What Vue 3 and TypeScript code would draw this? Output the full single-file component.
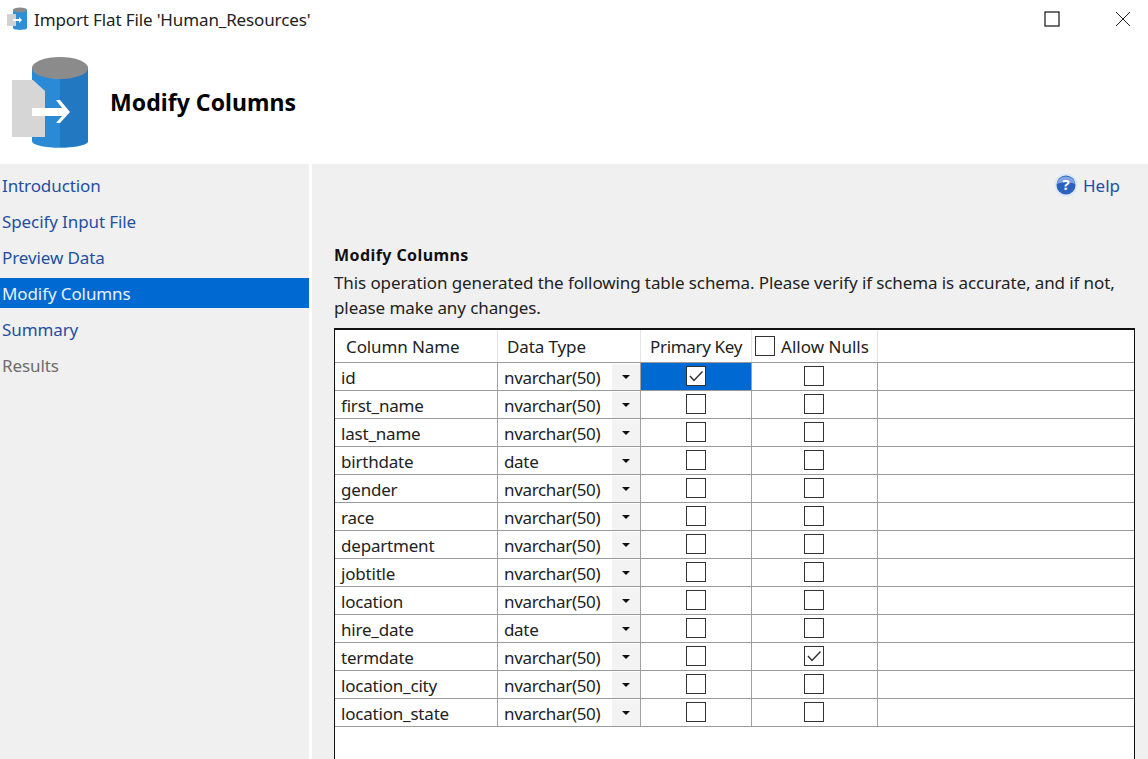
<script setup lang="ts">
interface Column {
  name: string;
  type: string;
  primary?: boolean;
  nulls?: boolean;
}

const navItems = ['Introduction', 'Specify Input File', 'Preview Data', 'Modify Columns', 'Summary', 'Results'];
const activeNav = 'Modify Columns';

const columns: Column[] = [
  { name: 'id', type: 'nvarchar(50)', primary: true },
  { name: 'first_name', type: 'nvarchar(50)' },
  { name: 'last_name', type: 'nvarchar(50)' },
  { name: 'birthdate', type: 'date' },
  { name: 'gender', type: 'nvarchar(50)' },
  { name: 'race', type: 'nvarchar(50)' },
  { name: 'department', type: 'nvarchar(50)' },
  { name: 'jobtitle', type: 'nvarchar(50)' },
  { name: 'location', type: 'nvarchar(50)' },
  { name: 'hire_date', type: 'date' },
  { name: 'termdate', type: 'nvarchar(50)', nulls: true },
  { name: 'location_city', type: 'nvarchar(50)' },
  { name: 'location_state', type: 'nvarchar(50)' },
];
</script>

<template>
  <div class="window">
    <div class="titlebar">
      <svg class="app-icon" width="22" height="26" viewBox="0 0 22 26">
        <path d="M7 4c0-2.500 14-2.500 14 0v18c0 2.500-14 2.500-14 0z" fill="#2f8fd6" />
        <ellipse cx="14" cy="4" rx="7" ry="2.600" fill="#8a8a8a" />
        <rect x="1" y="8" width="9" height="12" fill="#d2d2d2" />
        <path d="M7 13h6v-2l3 3-3 3v-2H7z" fill="#fff" />
      </svg>
      <span class="title">Import Flat File 'Human_Resources'</span>
      <div class="win-controls">
        <svg width="16" height="16" viewBox="0 0 16 16"><rect x="1" y="1" width="14" height="14" fill="none" stroke="#111" stroke-width="1.2" /></svg>
        <svg width="16" height="16" viewBox="0 0 16 16"><path d="M1 1l14 14M15 1L1 15" stroke="#222" stroke-width="1" /></svg>
      </div>
    </div>

    <div class="banner">
      <svg class="banner-icon" width="80" height="94" viewBox="0 0 80 94">
        <path d="M20 10v74c0 9 56 9 56 0V10z" fill="#2a8ad6" />
        <path d="M48 17v73c14 0 28-2 28-6V10z" fill="#2279c2" />
        <ellipse cx="48" cy="11" rx="28" ry="11" fill="#8b8b8b" />
        <path d="M0 23h21l12 11v46H0z" fill="#d6d6d6" />
        <path d="M20 51h30l-6-8h4l10 12-10 11h-4l6-7H20z" fill="#fff" />
      </svg>
      <h1>Modify Columns</h1>
    </div>

    <div class="body">
      <nav class="sidebar">
        <a
          v-for="item in navItems"
          :key="item"
          class="nav-item"
          :class="{ active: item === activeNav, disabled: item === 'Results' }"
        ><span>{{ item }}</span></a>
      </nav>

      <main class="content">
        <div class="help">
          <svg width="24" height="24" viewBox="0 0 24 24">
            <circle cx="12" cy="12" r="11.500" fill="#dce8f7" />
            <circle cx="12" cy="12" r="9.500" fill="#2c62bd" />
            <path d="M3 11a9 7.500 0 0 1 18 0c-4-2.500-14-2.500-18 0z" fill="#7fa6e3" />
            <text x="12" y="17" text-anchor="middle" class="help-mark">?</text>
          </svg>
          <span>Help</span>
        </div>

        <h2>Modify Columns</h2>
        <p>This operation generated the following table schema. Please verify if schema is accurate, and if not, please make any changes.</p>

        <div class="grid">
          <div class="row head">
            <div class="cell name">Column Name</div>
            <div class="cell type">Data Type</div>
            <div class="cell key">Primary Key</div>
            <div class="cell nulls">
              <span class="box"></span>
              <span class="nulls-label">Allow Nulls</span>
            </div>
          </div>

          <div v-for="col in columns" :key="col.name" class="row">
            <div class="cell name"><span>{{ col.name }}</span></div>
            <div class="cell type">
              <span class="type-label">{{ col.type }}</span>
              <span class="drop"><i></i></span>
            </div>
            <div class="cell key" :class="{ selected: col.primary }">
              <span class="box">
                <svg v-if="col.primary" width="20" height="20" viewBox="0 0 20 20"><path d="M4 10l4 4.500 8.500-9" fill="none" stroke="#333" stroke-width="1.500" /></svg>
              </span>
            </div>
            <div class="cell nulls">
              <span class="box">
                <svg v-if="col.nulls" width="20" height="20" viewBox="0 0 20 20"><path d="M4 10l4 4.500 8.500-9" fill="none" stroke="#333" stroke-width="1.500" /></svg>
              </span>
            </div>
          </div>
        </div>
      </main>
    </div>
  </div>
</template>

<style>
html,
body {
  margin: 0;
  overflow: hidden;
  background: #fff;
}
</style>

<style scoped>
.window {
  width: 1148px;
  height: 759px;
  display: flex;
  flex-direction: column;
  overflow: hidden;
  background: #fff;
  color: #222;
  font-family: "Noto Sans", "Open Sans", sans-serif;
  font-size: 17px;
}

.titlebar {
  height: 38px;
  display: flex;
  align-items: center;
  padding-left: 6px;
  flex-shrink: 0;
}

.app-icon {
  margin-right: 6px;
}

.title {
  font-size: 17px;
  letter-spacing: -0.13px;
  color: #222;
}

.win-controls {
  margin-left: auto;
  display: flex;
  gap: 55px;
  padding-right: 17px;
  margin-top: -1px;
}

.banner {
  height: 126px;
  display: flex;
  align-items: center;
  padding-left: 12px;
  flex-shrink: 0;
}

.banner-icon {
  margin-right: 18px;
  margin-top: 5px;
}

h1 {
  margin: 2px 0 0;
  font-size: 23px;
  font-weight: 700;
  color: #000;
  letter-spacing: 0.05px;
}

.body {
  flex: 1;
  display: flex;
  gap: 3px;
  min-height: 0;
}

.sidebar {
  width: 309px;
  background: #f0f0f0;
  padding-top: 6px;
  display: flex;
  flex-direction: column;
  gap: 6px;
}

.nav-item {
  height: 30px;
  line-height: 30px;
  padding-left: 2px;
  color: #1f4fa3;
  letter-spacing: -0.1px;
}

.nav-item span {
  position: relative;
  top: 1px;
}

.nav-item.active {
  background: #0069d2;
  color: #e8f1fb;
}

.nav-item.disabled {
  color: #6d6d6d;
}

.content {
  flex: 1;
  background: #f0f0f0;
  padding: 0 13px 0 22px;
  min-width: 0;
}

.help {
  display: flex;
  justify-content: flex-end;
  align-items: center;
  gap: 5px;
  height: 42px;
  padding-right: 15px;
  color: #1f4fa3;
  font-size: 17px;
}

.help-mark {
  fill: #fff;
  font-size: 15px;
  font-weight: 700;
  font-family: "Noto Sans", sans-serif;
}

h2 {
  margin: 37px 0 0;
  font-size: 16px;
  line-height: 24px;
  font-weight: 700;
  color: #111;
  letter-spacing: 0.42px;
}

p {
  margin: 3px 0 8px;
  line-height: 25px;
  letter-spacing: -0.1px;
  color: #222;
}

.grid {
  height: 500px;
  box-sizing: border-box;
  border: 1px solid #111;
  border-top-width: 2px;
  background: #fff;
  letter-spacing: -0.33px;
}

.row {
  display: grid;
  grid-template-columns: 163px 143px 111px 126px;
  height: 28px;
  box-sizing: border-box;
  border-bottom: 1px solid #9a9a9a;
}

.row.head {
  height: 33px;
}

.cell {
  display: flex;
  align-items: center;
  box-sizing: border-box;
  border-right: 1px solid #a0a0a0;
  padding-left: 6px;
  min-width: 0;
}

.row:not(.head) .name span,
.type-label {
  position: relative;
  top: 1px;
}

.row:not(.head) .name {
  letter-spacing: -0.2px;
}

.head .cell {
  border-right-color: #e4e4e4;
  padding-left: 11px;
  padding-top: 1px;
  letter-spacing: -0.1px;
}

.type {
  padding-left: 6px;
}

.type-label {
  flex: 1;
}

.drop {
  width: 28px;
  height: 26px;
  background: #f3f3f3;
  display: flex;
  align-items: center;
  justify-content: center;
}

.drop i {
  width: 0;
  height: 0;
  border-left: 4px solid transparent;
  border-right: 4px solid transparent;
  border-top: 4px solid #111;
}

.key,
.row .nulls {
  justify-content: center;
  padding-left: 0;
  padding-right: 1px;
}

.head .cell.type {
  padding-left: 9px;
}

.head .cell.key {
  justify-content: flex-start;
  padding-left: 9px;
  letter-spacing: -0.33px;
}

.head .cell.nulls {
  justify-content: flex-start;
  padding-left: 3px;
  gap: 6px;
  letter-spacing: 0.02px;
}

.selected {
  background: #0069d2;
}

.box {
  width: 20px;
  height: 20px;
  box-sizing: border-box;
  border: 1px solid #333;
  background: #fff;
  display: inline-block;
  position: relative;
  top: -1px;
  flex-shrink: 0;
}

.box svg {
  position: absolute;
  left: -1px;
  top: -1px;
}

.nulls-label {
  white-space: nowrap;
}
</style>
